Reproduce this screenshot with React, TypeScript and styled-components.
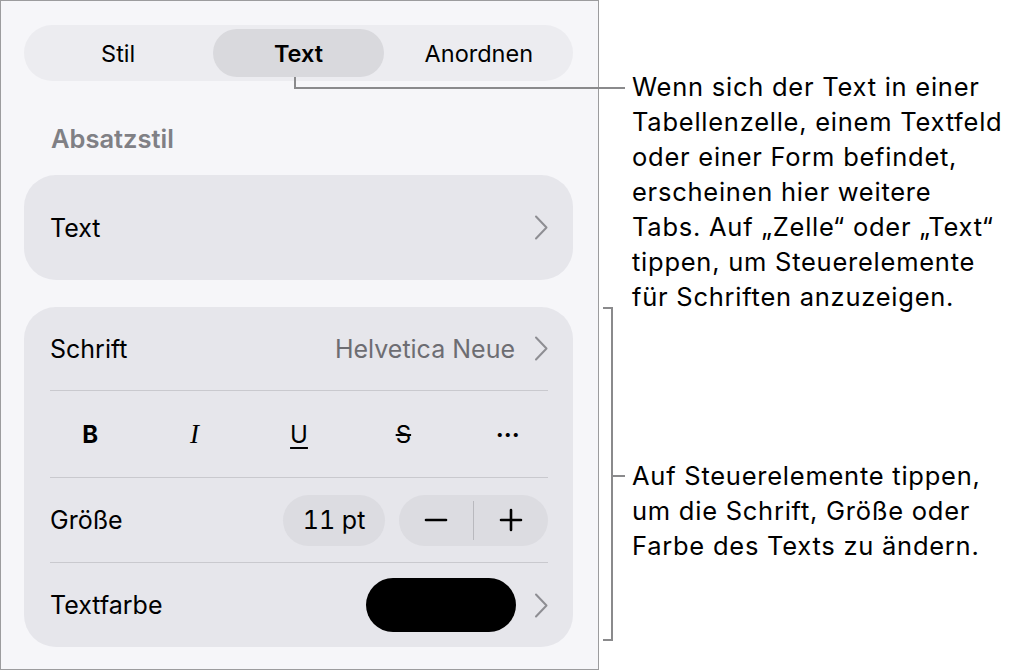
import React from 'react';
import styled, { createGlobalStyle } from 'styled-components';

const GlobalStyle = createGlobalStyle`
  html, body {
    margin: 0;
    padding: 0;
    background: #ffffff;
  }
  body {
    font-family: Inter, "Noto Sans", "Liberation Sans", sans-serif;
    color: #000;
    -webkit-font-smoothing: antialiased;
  }
`;

const Page = styled.div`
  position: relative;
  display: flex;
  width: 1020px;
  height: 670px;
  overflow: hidden;
`;

const Panel = styled.div`
  box-sizing: border-box;
  width: 599px;
  height: 670px;
  flex-shrink: 0;
  padding: 24px 25px 0 23px;
  background: #f6f6f9;
  border: 1px solid #9c9c9e;
  display: flex;
  flex-direction: column;
`;

const TabBar = styled.div`
  box-sizing: border-box;
  height: 56px;
  padding: 4px;
  border-radius: 28px;
  background: #ececf0;
  display: grid;
  grid-template-columns: repeat(3, 1fr);
`;

const Tab = styled.div<{ $active?: boolean }>`
  margin: 0 5px;
  border-radius: 24px;
  display: flex;
  align-items: center;
  justify-content: center;
  font-size: 23.5px;
  font-weight: ${(p) => (p.$active ? 600 : 400)};
  background: ${(p) => (p.$active ? '#d9d9dd' : 'transparent')};
`;

const SectionTitle = styled.div`
  margin: 42px 0 0 27px;
  height: 32px;
  line-height: 32px;
  font-size: 25.5px;
  font-weight: 600;
  color: #808085;
`;

const Card = styled.div<{ $gap: number }>`
  margin-top: ${(p) => p.$gap}px;
  border-radius: 32px;
  background: #e6e6eb;
  display: flex;
  flex-direction: column;
`;

const Row = styled.div<{ $height: number }>`
  box-sizing: border-box;
  height: ${(p) => p.$height}px;
  margin: 0 25px 0 26px;
  display: flex;
  align-items: center;
  gap: 14px;
  font-size: 25px;
`;

const Label = styled.span`
  flex: 1;
`;

const Value = styled.span`
  color: #6d6d72;
  margin-right: 5px;
`;

const FormatRow = styled.div`
  height: 86px;
  margin: 0 13px 0 14px;
  display: grid;
  grid-template-columns: repeat(5, 1fr);
  align-items: center;
`;

const Divider = styled.div`
  height: 1px;
  margin: 0 25px 0 26px;
  background: #c9c9ce;
`;

type FormatKind = 'bold' | 'italic' | 'underline' | 'strike' | 'more';

const FormatButton = styled.span<{ $variant: FormatKind }>`
  text-align: center;
  font-size: ${(p) => (p.$variant === 'italic' ? 27 : 24)}px;
  font-family: ${(p) =>
    p.$variant === 'italic' ? '"Liberation Serif", "DejaVu Serif", serif' : 'inherit'};
  font-weight: ${(p) => (p.$variant === 'bold' || p.$variant === 'more' ? 700 : 400)};
  font-style: ${(p) => (p.$variant === 'italic' ? 'italic' : 'normal')};
  text-decoration: ${(p) =>
    p.$variant === 'underline' ? 'underline' : p.$variant === 'strike' ? 'line-through' : 'none'};
  text-decoration-thickness: 1.6px;
  text-underline-offset: 4px;
`;

const Pill = styled.div`
  box-sizing: border-box;
  height: 51px;
  border-radius: 26px;
  background: #dcdce1;
  display: flex;
  align-items: center;
  justify-content: center;
`;

const SizeField = styled(Pill)`
  width: 102px;
  font-size: 25px;
  font-variant-numeric: tabular-nums;
`;

const Stepper = styled(Pill)`
  width: 149px;
`;

const StepButton = styled.div`
  flex: 1;
  display: flex;
  align-items: center;
  justify-content: center;
`;

const StepDivider = styled.div`
  width: 1px;
  height: 39px;
  background: #b9b9be;
`;

const Swatch = styled.div<{ $color: string }>`
  width: 150px;
  height: 54px;
  border-radius: 27px;
  background: ${(p) => p.$color};
  margin-right: 4px;
`;

const Notes = styled.div`
  flex: 1;
  padding: 69px 0 0 33px;
  display: flex;
  flex-direction: column;
`;

const Note = styled.p<{ $top: number }>`
  margin: ${(p) => p.$top}px 0 0 0;
  font-size: 25.5px;
  line-height: 35px;
  letter-spacing: 0.75px;
  color: #000;
  white-space: nowrap;
`;

const Leaders = styled.svg`
  position: absolute;
  left: 0;
  top: 0;
  pointer-events: none;
`;

const Chevron = () => (
  <svg width="14" height="25" viewBox="0 0 14 25" fill="none">
    <path d="M2 1.5 L12.5 12.5 L2 23.5" stroke="#8e8e93" strokeWidth="2" strokeLinecap="round" strokeLinejoin="round" />
  </svg>
);

const Minus = () => (
  <svg width="24" height="24" viewBox="0 0 24 24">
    <path d="M2 12 H22" stroke="#000" strokeWidth="2.6" strokeLinecap="round" />
  </svg>
);

const Plus = () => (
  <svg width="24" height="24" viewBox="0 0 24 24">
    <path d="M2 12 H22 M12 2 V22" stroke="#000" strokeWidth="2.6" strokeLinecap="round" />
  </svg>
);

export default function App() {
  return (
    <>
      <GlobalStyle />
      <Page>
        <Panel>
          <TabBar>
            <Tab>Stil</Tab>
            <Tab $active>Text</Tab>
            <Tab>Anordnen</Tab>
          </TabBar>

          <SectionTitle>Absatzstil</SectionTitle>

          <Card $gap={20}>
            <Row $height={105}>
              <Label>Text</Label>
              <Chevron />
            </Row>
          </Card>

          <Card $gap={27}>
            <Row $height={83}>
              <Label>Schrift</Label>
              <Value>Helvetica Neue</Value>
              <Chevron />
            </Row>
            <Divider />
            <FormatRow>
              <FormatButton $variant="bold">B</FormatButton>
              <FormatButton $variant="italic">I</FormatButton>
              <FormatButton $variant="underline">U</FormatButton>
              <FormatButton $variant="strike">S</FormatButton>
              <FormatButton $variant="more">···</FormatButton>
            </FormatRow>
            <Divider />
            <Row $height={84}>
              <Label>Größe</Label>
              <SizeField>11 pt</SizeField>
              <Stepper>
                <StepButton><Minus /></StepButton>
                <StepDivider />
                <StepButton><Plus /></StepButton>
              </Stepper>
            </Row>
            <Divider />
            <Row $height={84}>
              <Label>Textfarbe</Label>
              <Swatch $color="#000000" />
              <Chevron />
            </Row>
          </Card>
        </Panel>

        <Notes>
          <Note $top={0}>
            Wenn sich der Text in einer<br />
            Tabellenzelle, einem Textfeld<br />
            oder einer Form befindet,<br />
            erscheinen hier weitere<br />
            Tabs. Auf „Zelle“ oder „Text“<br />
            tippen, um Steuerelemente<br />
            für Schriften anzuzeigen.
          </Note>
          <Note $top={144}>
            Auf Steuerelemente tippen,<br />
            um die Schrift, Größe oder<br />
            Farbe des Texts zu ändern.
          </Note>
        </Notes>

        <Leaders width="1020" height="670" viewBox="0 0 1020 670">
          <g stroke="#8a8a8c" strokeWidth="2" fill="none">
            <path d="M295 77 V88 H625" />
            <path d="M603 308 H612 V640 H603" />
            <path d="M612 476 H625" />
          </g>
        </Leaders>
      </Page>
    </>
  );
}
